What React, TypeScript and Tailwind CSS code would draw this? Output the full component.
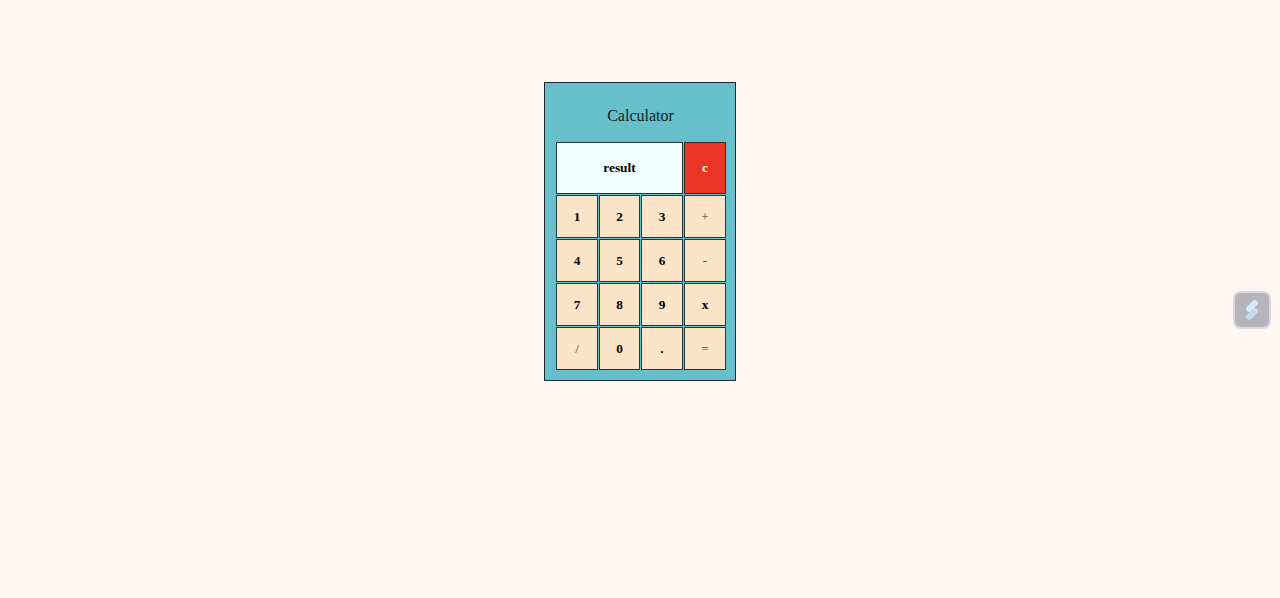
import React from 'react';

const keys: { label: string; bold: boolean }[] = [
  { label: '1', bold: true },
  { label: '2', bold: true },
  { label: '3', bold: true },
  { label: '+', bold: false },
  { label: '4', bold: true },
  { label: '5', bold: true },
  { label: '6', bold: true },
  { label: '-', bold: false },
  { label: '7', bold: true },
  { label: '8', bold: true },
  { label: '9', bold: true },
  { label: 'x', bold: true },
  { label: '/', bold: false },
  { label: '0', bold: true },
  { label: '.', bold: true },
  { label: '=', bold: false },
];

const App: React.FC = () => {
  return (
    <div className="relative min-h-[598px] w-full bg-[#fdf7f1] pt-[82px] font-['Liberation_Serif',serif]">
      <div className="mx-auto w-[192px] border border-[#1c2a2c] bg-[#67bfcc] pl-[11px] pr-[10px] pt-[24px] pb-[10px]">
        <h1 className="mb-[17px] text-center text-[16px] leading-[18px] text-[#0f1f22]">Calculator</h1>
        <div className="grid w-[170px] grid-cols-[42px_41px_42px_42px] grid-rows-[52px_repeat(4,43px)] gap-px">
          <div className="col-span-3 flex items-center justify-center border border-[#23393b] bg-[#f0ffff] text-[13.333px] font-bold text-black">
            result
          </div>
          <button className="flex items-center justify-center border border-[#3a2a28] bg-[#e83525] text-[13.333px] font-bold text-white">
            c
          </button>
          {keys.map((k) => (
            <button
              key={k.label}
              className={
                k.bold
                  ? 'flex items-center justify-center border border-[#23393b] bg-[#fbe4c8] text-[13.333px] font-bold text-black'
                  : 'flex items-center justify-center border border-[#23393b] bg-[#fbe4c8] text-[13.333px] font-normal text-[#444]'
              }
            >
              {k.label}
            </button>
          ))}
        </div>
      </div>

      {/* floating widget on the right edge */}
      <div className="absolute left-[1233px] top-[291px] flex h-[38px] w-[38px] items-center justify-center rounded-[8px] border-2 border-[#d9d9dc] bg-[#b4b4ba]">
        <svg width="24" height="24" viewBox="0 0 24 24">
          <rect x="9" y="1" width="6" height="14" rx="3" transform="rotate(45 12 8)" fill="#dce9f8" />
          <rect x="9" y="9" width="6" height="14" rx="3" transform="rotate(45 12 16)" fill="#c6daf2" />
        </svg>
      </div>
    </div>
  );
};

export default App;
